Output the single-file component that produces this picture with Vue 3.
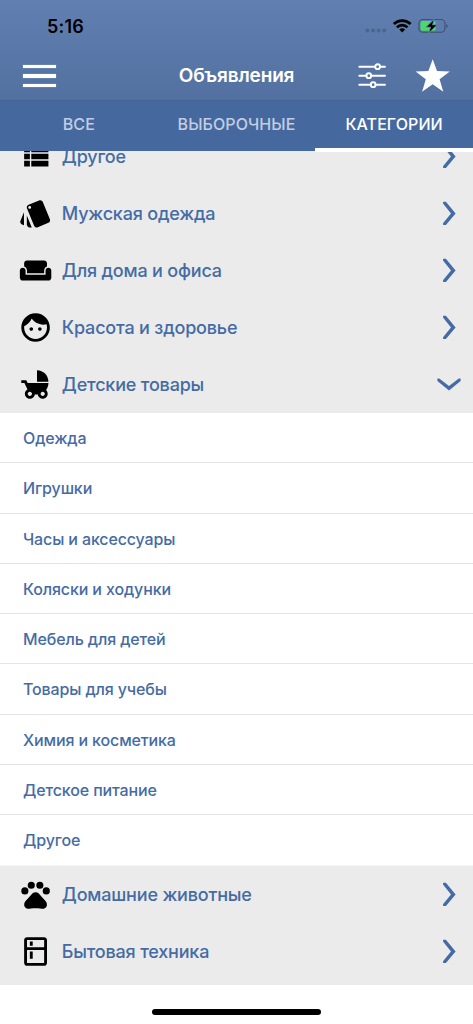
<script setup>
const before = [
  { name: 'Другое', icon: 'M4 14h4v-4H4v4zm0 5h4v-4H4v4zM4 9h4V5H4v4zm5 5h12v-4H9v4zm0 5h12v-4H9v4zM9 5v4h12V5H9z' },
  { name: 'Мужская одежда', icon: 'M2.53 19.65l1.34.56v-9.03l-2.43 5.86c-.41 1.02.08 2.19 1.09 2.61zm19.5-3.7L17.07 3.98c-.31-.75-1.04-1.21-1.81-1.23-.26 0-.53.04-.79.15L7.1 5.95c-.75.31-1.21 1.03-1.23 1.8-.01.27.04.54.15.8l4.96 11.97c.31.76 1.05 1.22 1.83 1.23.26 0 .52-.05.77-.15l7.36-3.05c1.02-.42 1.51-1.59 1.09-2.6zM7.88 8.75c-.55 0-1-.45-1-1s.45-1 1-1 1 .45 1 1-.45 1-1 1zm-2 11c0 1.1.9 2 2 2h1.45l-3.45-8.34v6.34z' },
  { name: 'Для дома и офиса', icon: 'M21 10c-1.1 0-2 .9-2 2v3H5v-3c0-1.1-.9-2-2-2s-2 .9-2 2v5c0 1.1.9 2 2 2h18c1.1 0 2-.9 2-2v-5c0-1.1-.9-2-2-2zm-3-5H6c-1.1 0-2 .9-2 2v2.15c1.16.41 2 1.51 2 2.82V14h12v-2.03c0-1.3.84-2.4 2-2.82V7c0-1.1-.9-2-2-2z' },
  { name: 'Красота и здоровье', icon: 'M9 11.75c-.69 0-1.25.56-1.25 1.25s.56 1.25 1.25 1.25 1.25-.56 1.25-1.25-.56-1.25-1.25-1.25zm6 0c-.69 0-1.25.56-1.25 1.25s.56 1.25 1.25 1.25 1.25-.56 1.25-1.25-.56-1.25-1.25-1.25zM12 2C6.48 2 2 6.48 2 12s4.48 10 10 10 10-4.48 10-10S17.52 2 12 2zm0 18c-4.41 0-8-3.59-8-8 0-.29.02-.58.05-.86 2.36-1.05 4.23-2.98 5.21-5.37C11.07 8.33 14.05 10 17.42 10c.78 0 1.53-.09 2.25-.26.21.71.33 1.47.33 2.26 0 4.41-3.59 8-8 8z' },
  { name: 'Детские товары', open: true, icon: 'M13 2v8h8c0-4.42-3.58-8-8-8zm6.32 13.89C20.37 14.54 21 12.84 21 11H6.44l-.95-2H2v2h2.22s1.89 4.07 2.12 4.42c-1.1.59-1.84 1.75-1.84 3.08C4.5 20.43 6.07 22 8 22c1.76 0 3.22-1.3 3.46-3h2.08c.24 1.7 1.7 3 3.46 3 1.93 0 3.5-1.57 3.5-3.5 0-1.04-.46-1.97-1.18-2.61zM8 20c-.83 0-1.5-.67-1.5-1.5S7.17 17 8 17s1.5.67 1.5 1.5S8.83 20 8 20zm9 0c-.83 0-1.5-.67-1.5-1.5S16.17 17 17 17s1.5.67 1.5 1.5S17.83 20 17 20z' },
]
const children = ['Одежда', 'Игрушки', 'Часы и аксессуары', 'Коляски и ходунки', 'Мебель для детей', 'Товары для учебы', 'Химия и косметика', 'Детское питание', 'Другое']
const after = [
  { name: 'Домашние животные', icon: 'M2 9.5a2.5 2.5 0 1 0 5 0a2.5 2.5 0 1 0-5 0zM6.5 5.5a2.5 2.5 0 1 0 5 0a2.5 2.5 0 1 0-5 0zM12.5 5.5a2.5 2.5 0 1 0 5 0a2.5 2.5 0 1 0-5 0zM17 9.5a2.5 2.5 0 1 0 5 0a2.5 2.5 0 1 0-5 0zM17.34 14.86c-.87-1.02-1.6-1.89-2.48-2.91-.46-.54-1.05-1.08-1.75-1.32-.11-.04-.22-.07-.33-.09-.25-.04-.52-.04-.78-.04s-.53 0-.79.05c-.11.02-.22.05-.33.09-.7.24-1.28.78-1.75 1.32-.87 1.02-1.6 1.89-2.48 2.91-1.31 1.31-2.92 2.76-2.62 4.79.29 1.02 1.02 2.03 2.33 2.32.73.15 3.06-.44 5.54-.44h.18c2.48 0 4.81.58 5.54.44 1.31-.29 2.04-1.31 2.33-2.32.31-2.04-1.3-3.49-2.61-4.8z' },
  { name: 'Бытовая техника', icon: 'M18 2.01L6 2c-1.1 0-2 .89-2 2v16c0 1.1.9 2 2 2h12c1.1 0 2-.9 2-2V4c0-1.11-.9-1.99-2-1.99zM18 20H6v-9.02h12V20zm0-11H6V4h12v5zM8 5h2v3H8zm0 7h2v5H8z' },
]
const groups = [before, after]
</script>

<template>
  <div class="screen">
    <header class="top">
      <div class="status">
        <span class="time">5:16</span>
        <svg class="indicators" width="84" height="20" viewBox="0 0 84 20">
          <g fill="#4a6590">
            <circle cx="3.4" cy="14.6" r="2" /><circle cx="9" cy="14.6" r="2" />
            <circle cx="14.6" cy="14.6" r="2" /><circle cx="20.2" cy="14.6" r="2" />
          </g>
          <g fill="none" stroke="#000" stroke-width="2.7">
            <path d="M29.800 8a12 12 0 0 1 16.800 0" />
            <path d="M32.900 11.400a7.500 7.500 0 0 1 10.600 0" />
          </g>
          <path d="M38.200 16.500l-2.900-2.900a4.100 4.100 0 0 1 5.800 0z" />
          <rect x="54.900" y="3.500" width="26" height="12.800" rx="3.800" fill="none" stroke="#3d5170" stroke-width="1.100" />
          <path d="M82.300 8v4q1.700-.6 1.300-2q.1-1.400-1.300-2z" fill="#3d5170" />
          <rect x="56.500" y="5.100" width="15.200" height="9.600" rx="2" fill="#4cd964" />
          <path d="M70 2.800L61.700 11.200h4.600l-1.800 6.200 8.700-8.700h-4.600l1.900-5.900z" fill="#5c7bab" stroke="#5c7bab" stroke-width="0.600" />
          <path d="M69.500 4.600L63 10.800h4.200l-1.700 4.900 6.700-6.500h-4.300z" />
        </svg>
      </div>
      <div class="nav">
        <div class="burger"><i></i><i></i><i></i></div>
        <h1>Объявления</h1>
        <svg class="filters" width="28" height="26" viewBox="0 0 28 26" fill="none" stroke="#fff" stroke-width="1.900" stroke-linecap="round">
          <path d="M1.300 3.700H17.200M22 3.700h5M1.300 12.700H8.400M13.200 12.700H27M1.300 21.700h11.500M17.600 21.700H27" />
          <circle cx="19.600" cy="3.700" r="2.400" /><circle cx="10.800" cy="12.700" r="2.400" /><circle cx="15.200" cy="21.700" r="2.400" />
        </svg>
        <svg class="star" width="36" height="34" viewBox="0 0 36 34" fill="#fff">
          <path d="M17.700.3l4.300 11.800 12.800.3-10.200 7.800 3.700 12.500-10.600-7.400-10.600 7.400 3.700-12.500L.6 12.400l12.800-.3z" />
        </svg>
      </div>
    </header>
    <nav class="tabs">
      <span>ВСЕ</span>
      <span>ВЫБОРОЧНЫЕ</span>
      <span class="active">КАТЕГОРИИ</span>
    </nav>
    <main class="list">
      <template v-for="(group, g) in groups" :key="g">
        <section class="group" :class="{ first: g === 0, last: g === 1 }">
          <div v-for="item in group" :key="item.name" class="row">
            <svg class="icon" viewBox="-0.3 -0.25 24.5 24.5"><path :d="item.icon" /></svg>
            <span class="name">{{ item.name }}</span>
            <svg class="chevron" width="24" height="24" viewBox="0 -0.4 24 24">
              <path v-if="item.open" d="M.4 6.200L2.200 6 12 13.500 21.800 6 23.600 6.200V8.600L12 18.200.4 8.600z" />
              <path v-else d="M6.200.4L6 2.200 14 12 6 21.800 6.200 23.600H8.900L18.600 12 8.900.4z" />
            </svg>
          </div>
        </section>
        <ul v-if="g === 0" class="sub">
          <li v-for="child in children" :key="child">{{ child }}</li>
        </ul>
      </template>
    </main>
    <footer><div class="home"></div></footer>
  </div>
</template>

<style scoped>
.screen {
  width: 473px;
  height: 1024px;
  display: flex;
  flex-direction: column;
  overflow: hidden;
  background: #fff;
  color: #456ba5;
  font-family: Inter, "Liberation Sans", sans-serif;
}
.top {
  height: 101px;
  flex: none;
  box-sizing: border-box;
  background: linear-gradient(#6180b1, #5271a1);
  border-bottom: 1px solid #486695;
}
.status {
  height: 52px;
  box-sizing: border-box;
  padding: 16px 25px 0 47px;
  display: flex;
  justify-content: space-between;
}
.time {
  font-size: 18px;
  line-height: 21px;
  font-weight: 600;
  letter-spacing: 0.2px;
  color: #000;
}
.nav {
  height: 48px;
  display: grid;
  grid-template-columns: 135px 203px 57px 78px;
  align-items: center;
}
.burger {
  width: 33px;
  margin-left: 23px;
  display: grid;
  gap: 6px;
}
.burger i {
  height: 3.300px;
  background: #fff;
  box-shadow: 0 0 1px #e5eaf2;
}
h1 {
  margin: 0;
  text-align: center;
  color: #fff;
  font-size: 19px;
  line-height: 24px;
  font-weight: 600;
  letter-spacing: -0.15px;
}
.filters { margin-left: 20px; }
.star { margin-left: 20px; }
.tabs {
  height: 50px;
  flex: none;
  display: grid;
  grid-template-columns: repeat(3, 1fr);
  background: #45699f;
  color: #c3cde0;
  font-size: 16px;
  font-weight: 500;
  letter-spacing: 0.08px;
  line-height: 46px;
  text-align: center;
  position: relative;
  z-index: 1;
}
.active {
  color: #fff;
  border-bottom: 4px solid #fff;
  margin-bottom: -1px;
}
.list {
  height: 834px;
  flex: none;
  overflow: hidden;
}
.group { background: #ebebeb; }
.first { margin-top: -23.500px; }
.last { padding-bottom: 6px; }
.row {
  height: 57.100px;
  display: flex;
  align-items: center;
  padding: 0 11.700px 0 18px;
}
.icon {
  width: 35px;
  height: 35px;
  flex: none;
}
.name {
  flex: 1;
  margin-left: 8.800px;
  font-size: 18px;
  font-weight: 500;
  letter-spacing: -0.19px;
  white-space: nowrap;
}
.chevron { fill: #456ba5; }
.sub {
  margin: 0;
  padding: 0;
  list-style: none;
  background: #fff;
}
.sub li {
  height: 50.290px;
  box-sizing: border-box;
  padding-left: 23px;
  border-bottom: 1px solid #e4e4e4;
  font-size: 16px;
  line-height: 50px;
  font-weight: 500;
  letter-spacing: -0.13px;
}
.sub li:last-child { border-bottom-color: #f5f5f5; }
footer {
  flex: 1;
  display: flex;
  justify-content: center;
  align-items: flex-start;
  padding-top: 24px;
}
.home {
  width: 169px;
  height: 6px;
  border-radius: 3px;
  background: #000;
}
</style>
